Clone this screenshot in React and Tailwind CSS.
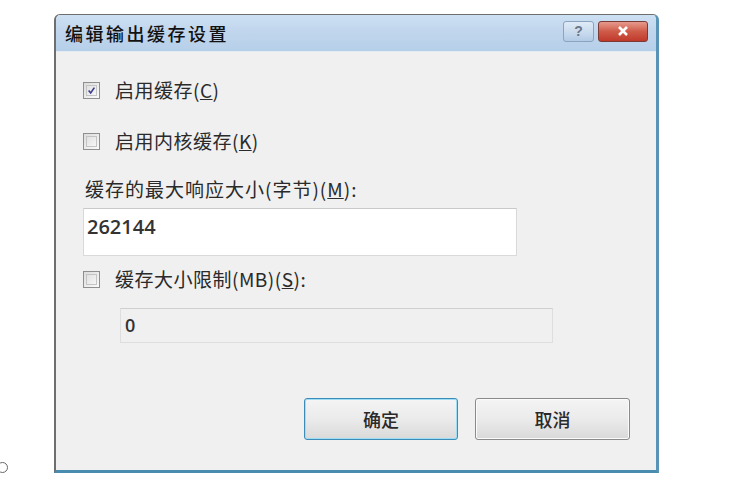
import React from "react";

const font = { fontFamily: '"Noto Sans CJK SC", "Liberation Sans", sans-serif' };

function Check({ checked }) {
  return (
    <div className="w-[17px] h-[17px] border border-[#8e8f8f] bg-gradient-to-br from-[#dcdcdc] to-[#fbfbfb] p-[2px] shrink-0">
      <div className="w-full h-full border border-[#c4c4c4] bg-gradient-to-br from-[#e2e2e2] to-[#f6f6f6] flex items-center justify-center">
        {checked && (
          <svg width="11" height="11" viewBox="0 0 11 11">
            <path d="M2 5.5 L4.5 8.5 L9 2" fill="none" stroke="#3b3d8f" strokeWidth="2" />
          </svg>
        )}
      </div>
    </div>
  );
}

export default function App() {
  return (
    <div className="w-[740px] h-[494px] bg-white flex overflow-hidden" style={font}>
      <div className="w-[54px] flex flex-col justify-end pb-[21px]">
        <div className="w-[11px] h-[11px] rounded-full border border-[#666] -ml-[3px]" />
      </div>
      <div className="mt-[14px] w-[605px] h-[459px] flex flex-col rounded-t-[6px] border-l-2 border-t border-[#6e6e6e] border-r-[3px] border-r-[#5a93b8] border-b-[3px] border-b-[#4a8cb0] bg-[#f0f0f0] overflow-hidden">
        <div className="h-[37px] shrink-0 flex items-center justify-between bg-gradient-to-b from-[#cde0f3] via-[#bfd5ec] to-[#b6cfe9] border-b border-[#e4ebf3] pl-[9px] pr-[8px]">
          <span className="text-[18px] tracking-[2.5px] text-[#111] font-medium mt-[1px]">编辑输出缓存设置</span>
          <div className="flex items-center gap-[4px] -mt-[4px]">
            <div className="w-[31px] h-[21px] rounded-[3px] border border-[#8aa3bf] bg-gradient-to-b from-[#dfeaf6] via-[#cbdcee] to-[#b3cbe6] flex items-center justify-center text-[14px] font-bold text-[#6b7686]" style={{ fontFamily: '"Liberation Sans", sans-serif' }}>?</div>
            <div className="w-[50px] h-[21px] rounded-[3px] border border-[#7a3a35] bg-gradient-to-b from-[#e59a8d] via-[#cf5a48] to-[#c0392b] flex items-center justify-center">
              <svg width="12" height="10" viewBox="0 0 12 10">
                <path d="M2 1 L10 9 M10 1 L2 9" stroke="#ffffff" strokeWidth="2.6" />
              </svg>
            </div>
          </div>
        </div>
        <div className="flex-1 flex flex-col pl-[27px] pr-[20px] text-[#2a2a2a]">
          <div className="mt-[28px] h-[20px] flex items-center gap-[15px]">
            <Check checked />
            <span className="text-[19px] tracking-[0.5px]">启用缓存(<u>C</u>)</span>
          </div>
          <div className="mt-[31px] h-[20px] flex items-center gap-[15px]">
            <Check />
            <span className="text-[19px] tracking-[0.5px]">启用内核缓存(<u>K</u>)</span>
          </div>
          <div className="mt-[28px] h-[20px] flex items-center pl-[2px]">
            <span className="text-[19px] tracking-[1px]">缓存的最大响应大小(字节)(<u>M</u>):</span>
          </div>
          <div className="mt-[9px] w-[434px] h-[48px] bg-white border border-[#d9d9d9] border-t-[#c9c9c9] pl-[3px] pt-[3px]">
            <span className="text-[20px] font-semibold text-[#333]" style={{ fontFamily: '"Open Sans", "Liberation Sans", sans-serif' }}>262144</span>
          </div>
          <div className="mt-[13px] h-[20px] flex items-center gap-[15px]">
            <Check />
            <span className="text-[19px] tracking-[0.5px]">缓存大小限制(MB)(<u>S</u>):</span>
          </div>
          <div className="mt-[19px] ml-[37px] w-[433px] h-[35px] border border-[#dedede] border-t-[#cfcfcf] flex items-center pl-[4px]">
            <span className="text-[18px] font-semibold text-[#333]" style={{ fontFamily: '"Open Sans", "Liberation Sans", sans-serif' }}>0</span>
          </div>
          <div className="mt-[55px] flex justify-end gap-[17px] pr-[6px]">
            <div className="w-[154px] h-[42px] rounded-[3px] border border-[#3c8cb8] shadow-[inset_0_0_0_1px_#9fdcf5] bg-gradient-to-b from-[#f4f4f4] via-[#ebebeb] to-[#d9d9d9] flex items-center justify-center text-[18px] font-medium">确定</div>
            <div className="w-[155px] h-[42px] rounded-[3px] border border-[#8a8a8a] shadow-[inset_0_0_0_1px_#fbfbfb] bg-gradient-to-b from-[#f4f4f4] via-[#ebebeb] to-[#d9d9d9] flex items-center justify-center text-[18px] font-medium">取消</div>
          </div>
        </div>
      </div>
    </div>
  );
}
